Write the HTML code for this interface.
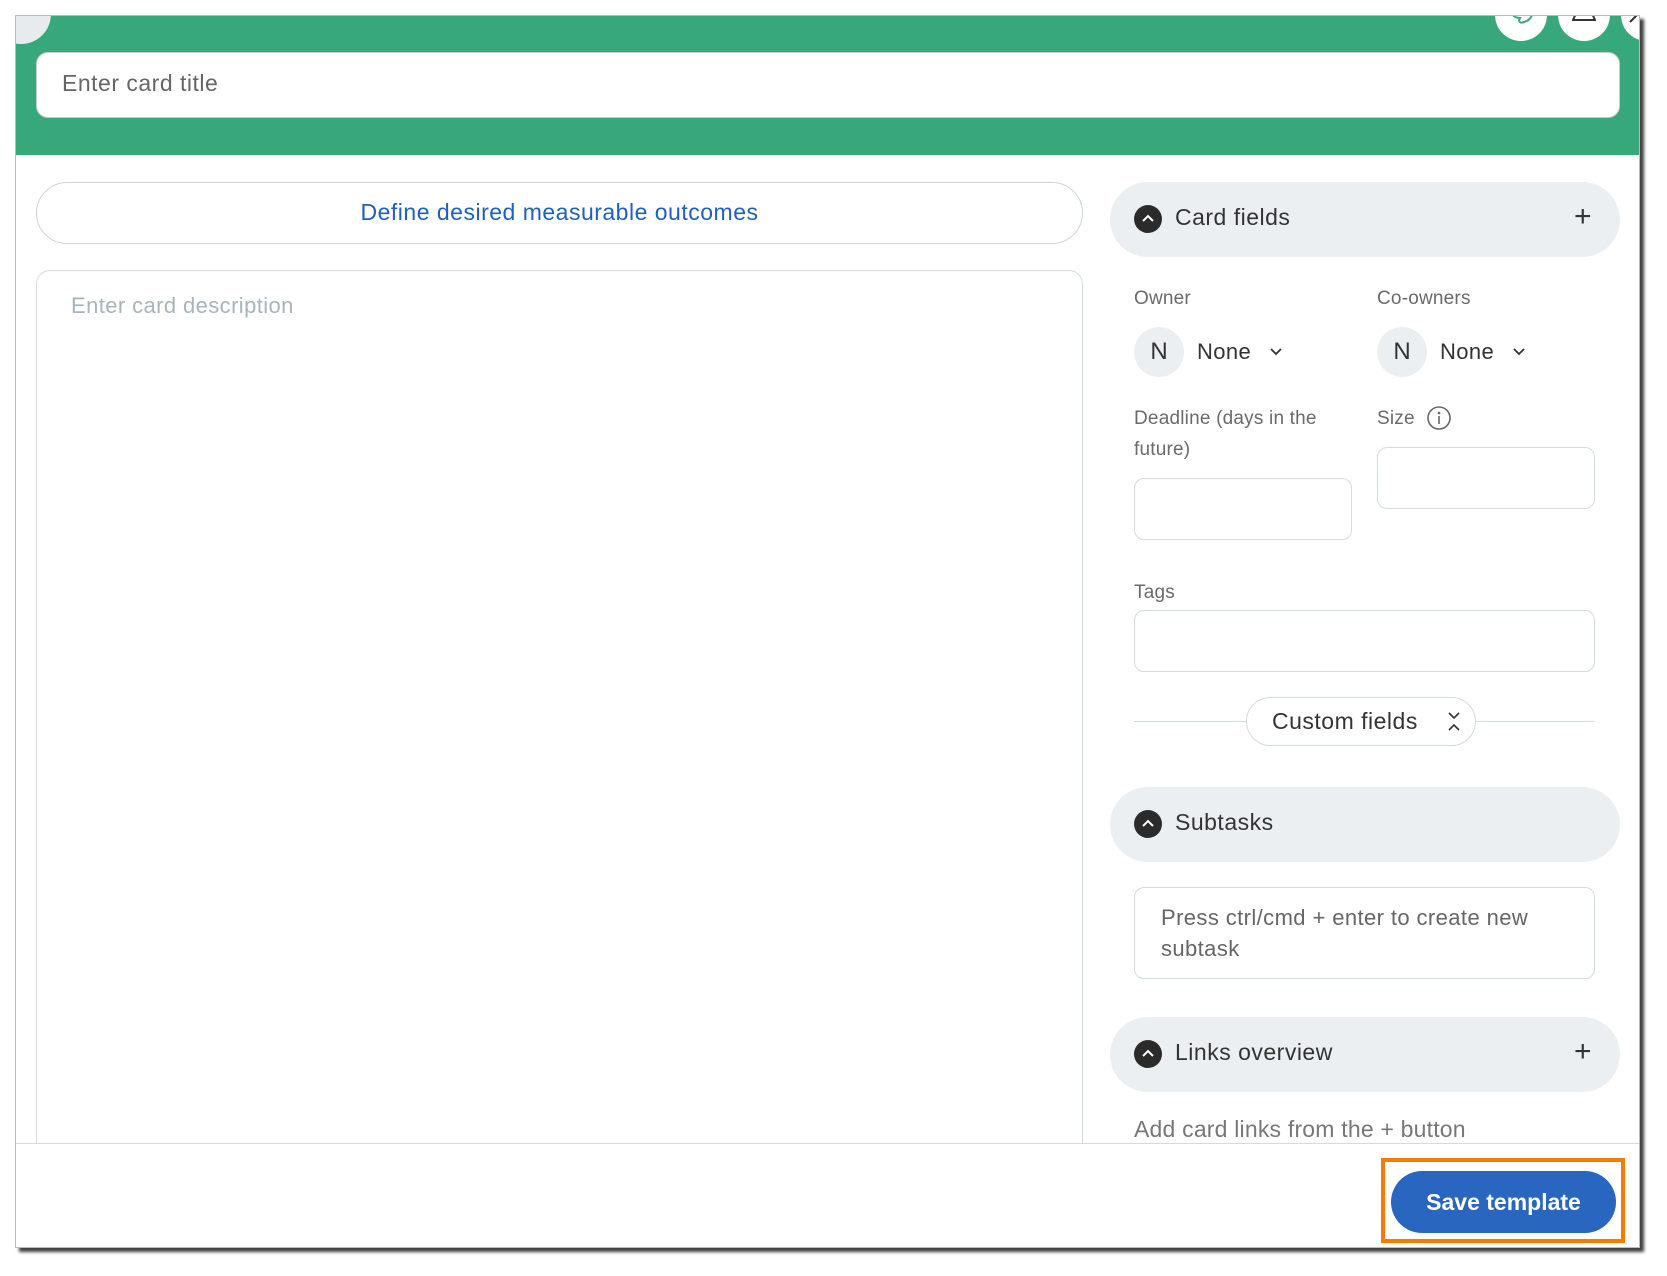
<!DOCTYPE html>
<html><head><meta charset="utf-8"><style>
*{box-sizing:border-box;margin:0;padding:0}
body{width:1667px;height:1276px;background:#fff;position:relative;overflow:hidden;font-family:"Liberation Sans",sans-serif}
.abs{position:absolute}
.frame{left:15px;top:15px;width:1625px;height:1233px;background:#fff;box-shadow:4px 4px 3px rgba(0,0,0,.75);overflow:hidden;border:1px solid #bbb}
.green{left:0;top:0;width:100%;height:139px;background:#36a87b}
.circ{border-radius:50%;background:#fff}
.lbl{color:#6a6a6a;font-size:19px;letter-spacing:.2px}
.inp{border:1.5px solid #d3dbe0;border-radius:10px;background:#fff}
.hdr{background:#eceff1;border-radius:38px}
.ico{width:28px;height:28px;border-radius:50%;background:#2b2b2b}
.ht{font-size:23px;color:#333;letter-spacing:.5px}
</style></head><body>
<div class="abs frame">
 <div class="abs green"></div>
 <div class="abs circ" style="left:-25px;top:-32px;width:60px;height:60px;background:#e8ebee"></div>
 <div class="abs circ" style="left:1479px;top:-27px;width:52px;height:52px"><svg class="abs" style="left:12px;top:20px" width="30" height="20"><path d="M4 0c0 6 4 9 9 9c-2 3 0 6 4 4c4-1 8-4 8-9" stroke="#36a87b" stroke-width="2" fill="none"/></svg></div>
 <div class="abs circ" style="left:1542px;top:-27px;width:52px;height:52px"><svg class="abs" style="left:14px;top:20px" width="24" height="14"><path d="M6 0L1 11h22L18 0" stroke="#333" stroke-width="2" fill="none"/></svg></div>
 <div class="abs circ" style="left:1605px;top:-27px;width:52px;height:52px"><svg class="abs" style="left:8px;top:22px" width="12" height="12"><path d="M1 11L10 2" stroke="#333" stroke-width="2"/></svg></div>
 <div class="abs" style="left:20px;top:36px;width:1584px;height:66px;background:#fff;border-radius:12px;border:1px solid #ccc"></div>
 <div class="abs" style="left:46px;top:54px;font-size:23px;color:#666;letter-spacing:.5px">Enter card title</div>

 <div class="abs" style="left:20px;top:166px;width:1047px;height:62px;border:1.5px solid #ccd3d8;border-radius:31px;text-align:center;line-height:59px;font-size:23px;color:#1f5fbf;letter-spacing:.5px">Define desired measurable outcomes</div>
 <div class="abs" style="left:20px;top:254px;width:1047px;height:900px;border:1.5px solid #d3dbe0;border-radius:14px"></div>
 <div class="abs" style="left:55px;top:277px;font-size:22px;color:#a9b4bb;letter-spacing:.4px">Enter card description</div>

 <div class="abs hdr" style="left:1094px;top:166px;width:510px;height:75px"></div>
 <div class="abs ico" style="left:1118px;top:189px"><svg width="28" height="28"><path d="M9 16l5-5 5 5" stroke="#fff" stroke-width="2" fill="none"/></svg></div>
 <div class="abs ht" style="left:1159px;top:188px">Card fields</div>
 <div class="abs" style="left:1558px;top:184px;font-size:30px;color:#333;font-weight:300">+</div>

 <div class="abs lbl" style="left:1118px;top:272px">Owner</div>
 <div class="abs lbl" style="left:1361px;top:272px">Co-owners</div>
 <div class="abs circ" style="left:1118px;top:311px;width:50px;height:50px;background:#eceff1;text-align:center;line-height:50px;font-size:24px;color:#333">N</div>
 <div class="abs" style="left:1181px;top:323px;font-size:22px;color:#333;letter-spacing:.4px">None</div>
 <svg class="abs" style="left:1253px;top:331px" width="14" height="10"><path d="M2 2l5 5 5-5" stroke="#333" stroke-width="1.8" fill="none"/></svg>
 <div class="abs circ" style="left:1361px;top:311px;width:50px;height:50px;background:#eceff1;text-align:center;line-height:50px;font-size:24px;color:#333">N</div>
 <div class="abs" style="left:1424px;top:323px;font-size:22px;color:#333;letter-spacing:.4px">None</div>
 <svg class="abs" style="left:1496px;top:331px" width="14" height="10"><path d="M2 2l5 5 5-5" stroke="#333" stroke-width="1.8" fill="none"/></svg>

 <div class="abs lbl" style="left:1118px;top:387px;width:210px;line-height:31px">Deadline (days in the future)</div>
 <div class="abs lbl" style="left:1361px;top:387px;line-height:31px">Size</div>
 <svg class="abs" style="left:1410px;top:389px" width="26" height="26"><circle cx="13" cy="13" r="11" stroke="#666" stroke-width="1.6" fill="none"/><circle cx="13" cy="8" r="1.3" fill="#666"/><path d="M13 11v8" stroke="#666" stroke-width="1.6"/></svg>
 <div class="abs inp" style="left:1118px;top:462px;width:218px;height:62px"></div>
 <div class="abs inp" style="left:1361px;top:431px;width:218px;height:62px"></div>

 <div class="abs lbl" style="left:1118px;top:566px">Tags</div>
 <div class="abs inp" style="left:1118px;top:594px;width:461px;height:62px"></div>

 <div class="abs" style="left:1118px;top:705px;width:461px;height:1px;background:#d3dbe0"></div>
 <div class="abs" style="left:1230px;top:681px;width:230px;height:49px;border:1.5px solid #d3dbe0;border-radius:25px;background:#fff"></div>
 <div class="abs" style="left:1256px;top:692px;font-size:23px;color:#333;letter-spacing:.5px">Custom fields</div>
 <svg class="abs" style="left:1430px;top:694px" width="16" height="24"><path d="M3 3l5 5 5-5M3 20l5-5 5 5" stroke="#333" stroke-width="1.6" fill="none"/></svg>

 <div class="abs hdr" style="left:1094px;top:771px;width:510px;height:75px"></div>
 <div class="abs ico" style="left:1118px;top:794px"><svg width="28" height="28"><path d="M9 16l5-5 5 5" stroke="#fff" stroke-width="2" fill="none"/></svg></div>
 <div class="abs ht" style="left:1159px;top:793px">Subtasks</div>
 <div class="abs inp" style="left:1118px;top:871px;width:461px;height:92px"></div>
 <div class="abs" style="left:1145px;top:886px;width:430px;font-size:22px;line-height:31px;color:#666;letter-spacing:.4px">Press ctrl/cmd + enter to create new subtask</div>

 <div class="abs hdr" style="left:1094px;top:1001px;width:510px;height:75px"></div>
 <div class="abs ico" style="left:1118px;top:1024px"><svg width="28" height="28"><path d="M9 16l5-5 5 5" stroke="#fff" stroke-width="2" fill="none"/></svg></div>
 <div class="abs ht" style="left:1159px;top:1023px">Links overview</div>
 <div class="abs" style="left:1558px;top:1019px;font-size:30px;color:#333;font-weight:300">+</div>
 <div class="abs" style="left:1118px;top:1100px;font-size:23px;color:#777;letter-spacing:.2px">Add card links from the + button</div>

 <div class="abs" style="left:0;top:1127px;width:100%;height:106px;background:#fff;border-top:1.5px solid #d3dbe0"></div>
 <div class="abs" style="left:1365px;top:1142px;width:244px;height:85px;border:4px solid #f47c00"></div>
 <div class="abs" style="left:1375px;top:1155px;width:225px;height:62px;border-radius:31px;background:#2866bf;color:#fff;font-weight:bold;font-size:23px;text-align:center;line-height:62px">Save template</div>
</div>
</body></html>
